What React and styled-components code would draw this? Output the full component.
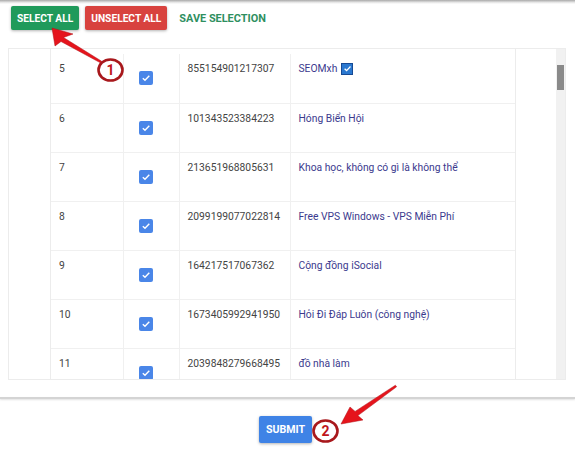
import React from 'react'
import styled, { createGlobalStyle } from 'styled-components'

const GlobalStyle = createGlobalStyle`
  body {
    margin: 0;
    background: #fff;
    font-family: Roboto, "Noto Sans", "Liberation Sans", sans-serif;
  }
`

const Page = styled.div`
  position: relative;
  width: 575px;
  height: 449px;
  overflow: hidden;
`

const TopShade = styled.div`
  height: 4px;
  background: linear-gradient(#a9a9a9, #e6e6e6 60%, #fff);
`

const Toolbar = styled.div`
  display: flex;
  gap: 6px;
  padding: 2px 0 0 11px;
`

const ActionButton = styled.button`
  height: 24px;
  padding: 0 6px;
  border: none;
  border-radius: 2px;
  font-family: Roboto, "Liberation Sans", sans-serif;
  font-size: ${p => (p.$flat ? '10.9px' : '10.2px')};
  font-weight: 700;
  color: ${p => (p.$flat ? '#2f8f5f' : '#fff')};
  background: ${p => p.$bg || 'transparent'};
  box-shadow: ${p => (p.$flat ? 'none' : '0 1px 3px rgba(0,0,0,0.3)')};
  cursor: pointer;
`

const Frame = styled.div`
  display: flex;
  margin: 18px 9px 0 8px;
  height: 330px;
  border: 1px solid #ececec;
  overflow: hidden;
`

const Gutter = styled.div`
  width: 41px;
  border-right: 1px solid #ececec;
`

const Scroller = styled.div`
  flex: 1;
  padding-top: 5px;
  overflow: hidden;
`

const Table = styled.table`
  border-collapse: collapse;
  table-layout: fixed;
  width: 465px;
`

const Row = styled.tr`
  height: 49px;
  border-bottom: 1px solid #f0f0f0;
`

const Cell = styled.td`
  vertical-align: top;
  padding: 7px 0 0 8px;
  border-right: 1px solid #f0f0f0;
  font-size: 10.3px;
  line-height: 15px;
  color: ${p => (p.$link ? '#3b3a8e' : '#444')};
  white-space: nowrap;
`

const CheckCell = styled.td`
  vertical-align: top;
  padding: 14px 0 0 15px;
  border-right: 1px solid #f0f0f0;
`

const CheckBox = styled.span`
  display: inline-flex;
  align-items: center;
  justify-content: center;
  width: 14px;
  height: 14px;
  border-radius: 2px;
  background: #4a86e8;
`

const Verified = styled.span`
  display: inline-flex;
  align-items: center;
  justify-content: center;
  width: 10px;
  height: 10px;
  margin-left: 4px;
  vertical-align: -1px;
  background: #2a78d0;
  border: 1px solid #174a94;
`

const Blank = styled.div`
  width: 40px;
  border-left: 1px solid #ececec;
`

const ScrollTrack = styled.div`
  width: 9px;
  background: #f1f1f1;
`

const ScrollThumb = styled.div`
  margin: 16px 1px 0 1px;
  height: 25px;
  background: #8a8a8a;
`

const Divider = styled.div`
  margin-top: 17px;
  height: 2px;
  background: #d4d4d4;
  box-shadow: 0 1px 2px rgba(0,0,0,0.12);
`

const Footer = styled.div`
  display: flex;
  justify-content: center;
  padding: 17px 4px 0 0;
`

const SubmitButton = styled.button`
  height: 27px;
  padding: 0 7px;
  border: none;
  border-radius: 2px;
  background: #3f83e6;
  color: #fff;
  font-family: Roboto, "Liberation Sans", sans-serif;
  font-size: 10.6px;
  font-weight: 700;
  box-shadow: 0 1px 3px rgba(0,0,0,0.3);
`

const Overlay = styled.svg`
  position: absolute;
  left: 0;
  top: 0;
  pointer-events: none;
`

const Tick = ({ size = 10 }) => (
  <svg width={size} height={size} viewBox="0 0 10 10">
    <path d="M1.8 5.2 L4 7.3 L8.3 2.8" fill="none" stroke="#fff" strokeWidth="1.4" />
  </svg>
)

const rows = [
  ['5', '855154901217307', 'SEOMxh', true],
  ['6', '101343523384223', 'Hóng Biển Hội'],
  ['7', '213651968805631', 'Khoa học, không có gì là không thể'],
  ['8', '2099199077022814', 'Free VPS Windows - VPS Miễn Phí'],
  ['9', '164217517067362', 'Cộng đồng iSocial'],
  ['10', '1673405992941950', 'Hỏi Đi Đáp Luôn (công nghệ)'],
  ['11', '2039848279668495', 'đồ nhà làm'],
]

const Marker = ({ cx, cy, n }) => (
  <g>
    <ellipse cx={cx} cy={cy} rx="12" ry="10.5" fill="#fff" stroke="#a8181c" strokeWidth="2.6" />
    <text x={cx} y={cy + 5} textAnchor="middle" fontFamily="Roboto, sans-serif" fontWeight="700" fontSize="14" fill="#c0161c">{n}</text>
  </g>
)

export default function App() {
  return (
    <Page>
      <GlobalStyle />
      <TopShade />
      <Toolbar>
        <ActionButton $bg="#1f9a5b">SELECT ALL</ActionButton>
        <ActionButton $bg="#d8423e">UNSELECT ALL</ActionButton>
        <ActionButton $flat>SAVE SELECTION</ActionButton>
      </Toolbar>
      <Frame>
        <Gutter />
        <Scroller>
          <Table>
            <colgroup>
              <col style={{ width: 72 }} />
              <col style={{ width: 56 }} />
              <col style={{ width: 111 }} />
              <col style={{ width: 226 }} />
            </colgroup>
            <tbody>
              {rows.map(([n, id, name, verified]) => (
                <Row key={n}>
                  <Cell>{n}</Cell>
                  <CheckCell>
                    <CheckBox><Tick /></CheckBox>
                  </CheckCell>
                  <Cell>{id}</Cell>
                  <Cell $link>
                    {name}
                    {verified && <Verified><Tick size={9} /></Verified>}
                  </Cell>
                </Row>
              ))}
            </tbody>
          </Table>
        </Scroller>
        <Blank />
        <ScrollTrack>
          <ScrollThumb />
        </ScrollTrack>
      </Frame>
      <Divider />
      <Footer>
        <SubmitButton>SUBMIT</SubmitButton>
      </Footer>
      <Overlay width="575" height="449">
        <g fill="#e5141c" stroke="#b00f14" strokeWidth="0.5">
          <polygon points="52,28 73,34 63.5,37.5 101.6,61.2 100.4,62.8 61,41.5 55,46" />
          <polygon points="341,424 350,407 355.1,411.4 395.4,385.2 396.6,386.8 357.9,415.6 363,420" />
        </g>
        <Marker cx={110.5} cy={70} n="1" />
        <Marker cx={325.5} cy={431} n="2" />
      </Overlay>
    </Page>
  )
}
